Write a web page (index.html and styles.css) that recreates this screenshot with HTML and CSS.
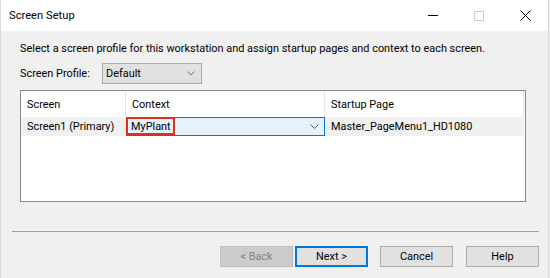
FILE: index.html
```html
<!DOCTYPE html>
<html lang="en">
<head>
    <meta charset="UTF-8">
    <meta name="viewport" content="width=device-width, initial-scale=1.0">
    <title>Screen Setup</title>
    <link rel="stylesheet" href="styles.css">
</head>
<body>
    <div class="window">
        <div class="titlebar">
            <span class="title">Screen Setup</span>
            <div class="caption-buttons">
                <span class="cap-btn"><span class="cap-min"></span></span>
                <span class="cap-btn"><span class="cap-max"></span></span>
                <span class="cap-btn">
                    <svg width="11" height="11" viewBox="0 0 11 11"><path d="M0.5 0.5 L10.5 10.5 M10.5 0.5 L0.5 10.5" stroke="#000" stroke-width="1" fill="none"/></svg>
                </span>
            </div>
        </div>
        <div class="content">
            <p class="intro">Select a screen profile for this workstation and assign startup pages and context to each screen.</p>
            <div class="profile-row">
                <label class="profile-label">Screen Profile:</label>
                <div class="combo">
                    <span>Default</span>
                    <svg class="chevron" width="8" height="5" viewBox="0 0 8 5"><path d="M0.5 0.5 L4 4 L7.5 0.5" stroke="#707070" stroke-width="1" fill="none"/></svg>
                </div>
            </div>
            <div class="grid">
                <div class="grid-row grid-head">
                    <div class="cell">Screen</div>
                    <div class="cell">Context</div>
                    <div class="cell last">Startup Page</div>
                </div>
                <div class="grid-row grid-body">
                    <div class="cell">Screen1 (Primary)</div>
                    <div class="cell context">
                        <span class="mark">MyPlant</span>
                        <svg class="chevron" width="9" height="5" viewBox="0 0 9 5"><path d="M0.5 0.5 L4.5 4.5 L8.5 0.5" stroke="#606060" stroke-width="1" fill="none"/></svg>
                    </div>
                    <div class="cell last">Master_PageMenu1_HD1080</div>
                </div>
            </div>
            <div class="separator"></div>
            <div class="buttons">
                <button class="btn disabled">&lt; Back</button>
                <button class="btn default">Next &gt;</button>
                <button class="btn cancel">Cancel</button>
                <button class="btn help">Help</button>
            </div>
        </div>
    </div>
</body>
</html>
```

FILE: styles.css
```css
body {
    margin: 0;
    background-color: #f0f0f0;
    font-family: Roboto, 'Noto Sans', sans-serif;
    font-size: 10.9px;
    color: #000;
}
.window {
    width: 549px;
    height: 278px;
    box-sizing: border-box;
    border-left: 1px solid #d9d9d9;
    border-right: 1px solid #d9d9d9;
    background-color: #f0f0f0;
    overflow: hidden;
    white-space: nowrap;
}
.titlebar {
    height: 31px;
    background: #fff;
    display: flex;
    align-items: center;
    padding-left: 8px;
}
.title {
    font-size: 11.2px;
}
.caption-buttons {
    margin-left: auto;
    display: flex;
    height: 100%;
}
.cap-btn {
    width: 46px;
    height: 100%;
    display: flex;
    justify-content: center;
    align-items: center;
}
.cap-min {
    width: 10px;
    height: 1px;
    background: #000;
}
.cap-max {
    width: 8px;
    height: 8px;
    border: 1px solid #cccccc;
}
.content {
    padding: 0 10px 0 11px;
}
.intro {
    margin: 10px 0 0 8px;
    line-height: 16px;
}
.profile-row {
    display: flex;
    align-items: center;
    margin: 6px 0 0 8px;
}
.profile-label {
    width: 82px;
}
.combo {
    width: 100px;
    height: 21px;
    box-sizing: border-box;
    border: 1px solid #adadad;
    background: #e1e1e1;
    display: flex;
    align-items: center;
    padding: 0 6px 0 3px;
}
.combo .chevron {
    margin-left: auto;
}
.grid {
    margin: 6px 0 0 8px;
    width: 506px;
    height: 112px;
    box-sizing: border-box;
    border: 1px solid #828790;
    background: #fff;
    padding-right: 1px;
}
.grid-row {
    display: grid;
    grid-template-columns: 105px 199px 199px;
}
.grid-head {
    height: 26px;
}
.grid-head .cell {
    border-right: 1px solid #e5e5e5;
    display: flex;
    align-items: center;
    padding-left: 6px;
}
.grid-body {
    height: 18px;
}
.grid-body .cell {
    background: #f0f0f0;
    display: flex;
    align-items: center;
    padding-left: 6px;
}
.grid-body .context {
    background: #e5f1fb;
    border: 1px solid #0078d7;
    padding: 0 4px 0 0;
}
.mark {
    height: 18px;
    box-sizing: border-box;
    border: 2px solid #e0301e;
    margin: -1px 0 0 -1px;
    padding: 0 2px 0 3px;
    display: flex;
    align-items: center;
}
.context .chevron {
    margin-left: auto;
    margin-right: 1px;
}
.separator {
    margin-top: 29px;
    height: 1px;
    background: #a0a0a0;
    width: 527px;
}
.buttons {
    display: flex;
    justify-content: flex-end;
    margin-top: 14px;
    width: 527px;
}
.btn {
    width: 73px;
    height: 21px;
    box-sizing: border-box;
    border: 1px solid #adadad;
    background: #e1e1e1;
    font-family: inherit;
    font-size: 10.9px;
    color: #000;
    padding: 0;
}
.btn.disabled {
    background: #cccccc;
    border-color: #bfbfbf;
    color: #838383;
}
.btn.default {
    margin-left: 2px;
    border: 2px solid #0078d7;
}
.btn.cancel {
    margin-left: 12px;
}
.btn.help {
    margin-left: 13px;
}
```
